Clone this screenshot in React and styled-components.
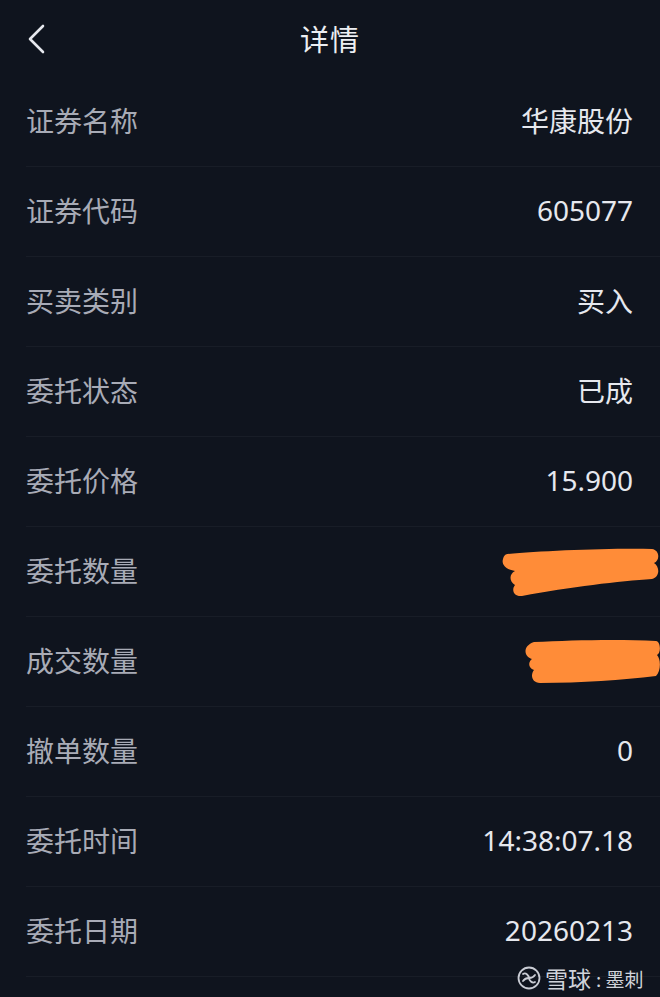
import React from "react";
import styled, { createGlobalStyle } from "styled-components";

const GlobalStyle = createGlobalStyle`
  html, body {
    margin: 0;
    padding: 0;
    background: #0f141e;
  }
  body {
    font-family: "Noto Sans", "Noto Sans CJK SC", sans-serif;
  }
`;

const rows = [
  { label: "证券名称", value: "华康股份" },
  { label: "证券代码", value: "605077" },
  { label: "买卖类别", value: "买入" },
  { label: "委托状态", value: "已成" },
  { label: "委托价格", value: "15.900" },
  { label: "委托数量", scribble: "a" },
  { label: "成交数量", scribble: "b" },
  { label: "撤单数量", value: "0" },
  { label: "委托时间", value: "14:38:07.18" },
  { label: "委托日期", value: "20260213" },
];

function Scribble(props) {
  if (props.kind === "a") {
    return (
      <ScribbleSvg width="160" height="52" viewBox="0 0 160 52">
        <path
          d="M8 7 C40 4 110 1 152 2 C160 3 160 14 154 16 C160 20 160 30 152 32 C120 34 70 40 22 49 C14 50 11 43 15 38 C9 34 9 27 15 24 C7 23 1 18 3 12 C4 8 6 7 8 7 Z"
          fill="#ff8c38"
        />
      </ScribbleSvg>
    );
  }
  return (
    <ScribbleSvg width="138" height="46" viewBox="0 0 138 46">
      <path
        d="M12 3 C50 1 100 0 134 2 C139 3 139 14 135 16 C139 20 139 32 134 37 C100 41 60 44 18 44 C10 44 8 36 12 31 C6 29 6 23 10 20 C2 18 0 7 12 3 Z"
        fill="#ff8c38"
      />
    </ScribbleSvg>
  );
}

function App() {
  return (
    <Page>
      <GlobalStyle />
      <Header>
        <BackButton>
          <svg width="20" height="30" viewBox="0 0 20 30">
            <path
              d="M17 2 L4 15 L17 28"
              fill="none"
              stroke="#e6e8ee"
              strokeWidth="2.6"
              strokeLinecap="round"
              strokeLinejoin="round"
            />
          </svg>
        </BackButton>
        <Title>详情</Title>
      </Header>
      <List>
        {rows.map((row) => (
          <Row key={row.label}>
            <Label>{row.label}</Label>
            {row.scribble ? (
              <ScribbleWrap $kind={row.scribble}>
                <Scribble kind={row.scribble} />
              </ScribbleWrap>
            ) : (
              <Value>{row.value}</Value>
            )}
          </Row>
        ))}
      </List>
      <Watermark>
        <svg width="24" height="24" viewBox="0 0 24 24">
          <circle cx="12" cy="12" r="10.5" fill="none" stroke="#c9ccd4" strokeWidth="1.8" />
          <path
            d="M6 8 C9 6 12 10 12 12 C12 14 15 18 18 16"
            fill="none"
            stroke="#c9ccd4"
            strokeWidth="1.8"
            strokeLinecap="round"
          />
          <path
            d="M6 15 C8 12 10 12 12 12 C14 12 16 12 18 9"
            fill="none"
            stroke="#c9ccd4"
            strokeWidth="1.8"
            strokeLinecap="round"
          />
        </svg>
        <WatermarkText>雪球</WatermarkText>
        <WatermarkSmall>: 墨刺</WatermarkSmall>
      </Watermark>
    </Page>
  );
}

const Page = styled.div`
  position: relative;
  width: 660px;
  height: 997px;
  overflow: hidden;
  background: #0f141e;
`;

const Header = styled.div`
  position: relative;
  height: 77px;
  display: flex;
  align-items: center;
  justify-content: center;
`;

const BackButton = styled.div`
  position: absolute;
  left: 26px;
  top: 24px;
  display: flex;
`;

const Title = styled.div`
  color: #eceef2;
  font-size: 29px;
  margin-top: -2px;
  letter-spacing: 1px;
`;

const List = styled.div`
  display: flex;
  flex-direction: column;
`;

const Row = styled.div`
  height: 89px;
  margin-left: 26px;
  padding-right: 27px;
  display: flex;
  align-items: center;
  justify-content: space-between;
  border-bottom: 1px solid #181d27;
`;

const Label = styled.div`
  color: #a8abb6;
  font-size: 28px;
  margin-top: -3px;
`;

const Value = styled.div`
  color: #e6e8ee;
  font-size: 28px;
  margin-top: -3px;
`;

const ScribbleWrap = styled.div`
  display: flex;
  margin-right: -27px;
  margin-top: ${(p) => (p.$kind === "a" ? "2px" : "0px")};
`;

const ScribbleSvg = styled.svg`
  display: block;
`;

const Watermark = styled.div`
  position: absolute;
  left: 517px;
  top: 961px;
  display: flex;
  align-items: center;
  gap: 4px;
  color: #d0d3da;
`;

const WatermarkText = styled.span`
  font-family: "Noto Sans CJK SC", sans-serif;
  font-size: 23px;
`;

const WatermarkSmall = styled.span`
  font-family: "Noto Sans CJK SC", sans-serif;
  font-size: 19px;
  margin-left: 1px;
`;

export default App;
